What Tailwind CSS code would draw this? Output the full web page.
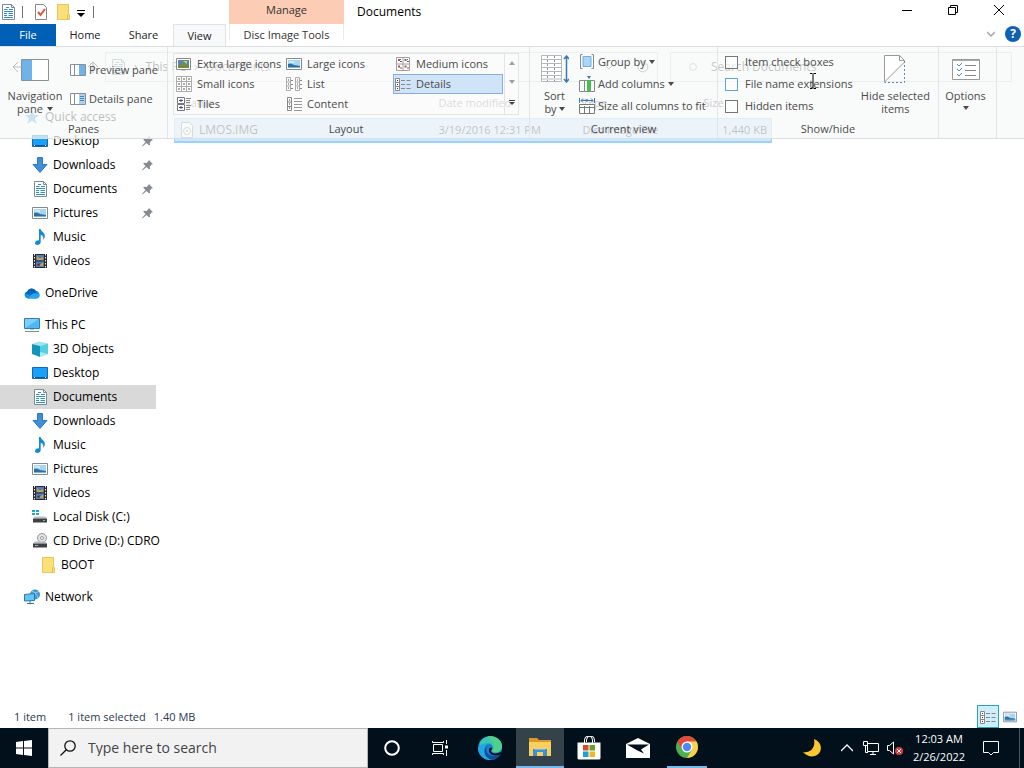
<!DOCTYPE html>
<html lang="en">
<head>
  <meta charset="UTF-8" />
  <meta name="viewport" content="width=device-width, initial-scale=1.0"/>
  <title>Documents</title>
  <script src="https://cdn.jsdelivr.net/npm/@tailwindcss/browser@4"></script>
</head>
<body class="h-screen flex flex-col overflow-hidden bg-white text-black text-[12px] leading-4 font-['Open_Sans','Noto_Sans',sans-serif]">

  <!-- Icon sprites -->
  <svg class="hidden">
    <symbol id="doc" viewBox="0 0 16 16"><path d="M2.500.5h9l3 3v12h-12z" fill="#fff" stroke="#7b8a94"/><path d="M11.500.5v3h3" fill="none" stroke="#7b8a94"/><path d="M6 3.500h3M4 5.500h3.500M9 5.500h4M4 7.500h9M4 9.500h3M8.500 9.500H13M4 11.500h3M8.500 11.500H13M4 13.500h9" stroke="#2f8fc4"/></symbol>
    <symbol id="desktop" viewBox="0 0 16 16"><path d="M.5 2.500h15v11H.5z" fill="#18a0fb" stroke="#0b6cb5"/><path d="M1 12.500h14" stroke="#0a4f8a"/><path d="M2 12.500h1M13 12.500h1" stroke="#fff"/></symbol>
    <symbol id="down" viewBox="0 0 16 16"><path d="M5.500.5h5v7h4.500L8 15.500 1 7.500h4.500z" fill="#3f8fd8" stroke="#2f78bf"/></symbol>
    <symbol id="pic" viewBox="0 0 16 16"><path d="M.5 2.500h15v11H.5z" fill="#fff" stroke="#7f8b93"/><path d="M2 4h12v8H2z" fill="#a8d5f2"/><path d="M2 8l3-.5 3 1.500 3 .5 3 .5V12H2z" fill="#2f6f9f"/><path d="M2 11h12v1H2z" fill="#7db4d3"/><path d="M3 6h5" stroke="#fff"/></symbol>
    <symbol id="music" viewBox="0 0 16 16"><path d="M7 0h1.600c.4 2.800 4.700 3.600 4.200 7.500-.2 1.500-.9 2.500-1.800 3.300.8-2.600.2-4.500-2.300-5v7.100C8.700 14.700 7 16 5.300 16 3.800 16 3 15.200 3 14c0-1.700 1.800-3 4-2.800z" fill="#1489d8"/></symbol>
    <symbol id="video" viewBox="0 0 16 16"><path d="M1 1h14v14H1z" fill="#2c2c30"/><path d="M2.500 1v14M13.500 1v14" stroke="#eee" stroke-dasharray="1.500 1.500"/><path d="M4 2h8v5.500H4zM4 8.500h8V14H4z" fill="#5479b5"/><path d="M5 3l3 2.500L11 4v3H5zM6 10l2 2 3-3v4H6z" fill="#c7a544"/><path d="M5 12l2-2 1 3z" fill="#1b2850"/></symbol>
    <symbol id="cloud" viewBox="0 0 16 16"><path d="M3.500 13.500A3.500 3.500 0 013 6.700 5 5 0 0112 6a3.800 3.800 0 01.5 7.500z" fill="#1490df"/><path d="M1 8.500A3.500 3.500 0 013 6.700 5 5 0 0112 6l1 1-6 3z" fill="#0364b8"/><path d="M3.500 13.500h9a3 3 0 002.800-4.300L9 8.500z" fill="#28a8ea"/></symbol>
    <symbol id="pc" viewBox="0 0 16 16"><path d="M.5 1.500h15v10H.5z" fill="#4db8f5" stroke="#387cab"/><path d="M1 11L15 2H1z" fill="#7dd0fb"/><path d="M1 14.500h14" stroke="#7e8b93"/><path d="M6 12.500h4" stroke="#b8c1c7"/></symbol>
    <symbol id="cube" viewBox="0 0 16 16"><path d="M0 3l7-2.500 9 2L8 5z" fill="#9be5ef"/><path d="M0 3l8 2v11l-8-3z" fill="#1693bd"/><path d="M8 5l8-2.500V13l-8 3z" fill="#54d0dc"/><path d="M8 11l8 2-8 3z" fill="#a4edf0"/></symbol>
    <symbol id="disk" viewBox="0 0 16 16"><path d="M0 1h3v2H0zM4 1h3v2H4zM0 4h3v2H0zM4 4h3v2H4z" fill="#1aa9c9"/><path d="M3 7.500h10l2 2H1z" fill="#b9bcbe"/><path d="M1 9.500h14v4H1z" fill="#3d4145"/><path d="M11 11.500h2" stroke="#5fd36a"/></symbol>
    <symbol id="cd" viewBox="0 0 16 16"><circle cx="10" cy="5" r="4.500" fill="#e1e4e5" stroke="#92989c"/><circle cx="10" cy="5" r="1.500" fill="#fff" stroke="#92989c"/><path d="M3 8.500h10l2 2H1z" fill="#b9bcbe"/><path d="M1 10.500h14v4H1z" fill="#3d4145"/><path d="M3 12.500h3" stroke="#aaa"/></symbol>
    <symbol id="folder" viewBox="0 0 16 16"><path d="M2.500.5h11v10h1v5h-12z" fill="#fbdf78" stroke="#ebc658"/><path d="M12.500 10.500v5" stroke="#e6b93f"/></symbol>
    <symbol id="network" viewBox="0 0 16 16"><circle cx="11" cy="5.500" r="5" fill="#3a9bd2"/><path d="M8 2c3 1 5 4 6 7M7 5c3-1 6-1 8-3" fill="none" stroke="#9bd5f2"/><path d="M.5 5.500l10-1v7l-10 .5z" fill="#64c4f4" stroke="#2a78aa"/><path d="M6 12v2M3 14.500h7" stroke="#2a78aa"/></symbol>
    <symbol id="star" viewBox="0 0 16 16"><path d="M8 1l2 5h5l-4 3.300L12.500 15 8 11.500 3.500 15 5 9.300 1 6h5z" fill="#3f9fe0"/></symbol>
    <symbol id="pin" viewBox="0 0 12 12"><path d="M7.500 0L12 4.500l-1.500.5-2 2 .2 2.700L7.500 10 5 7.700.5 11.500 0 11l3.800-4.500L1.500 4l.6-1L5 3.200l2-2z" fill="#858b90"/></symbol>
    <symbol id="file" viewBox="0 0 16 16"><path d="M2.500.5h8l3 3v12h-11z" fill="#fff" stroke="#808080"/><circle cx="8" cy="9" r="3.500" fill="none" stroke="#808080"/><circle cx="8" cy="9" r="1" fill="#808080"/></symbol>
    <symbol id="grid" viewBox="0 0 16 16"><path d="M.5.5h15v15H.5zM5.500.5v15M10.500.5v15M.5 5.500h15M.5 10.500h15" fill="#fff" stroke="#aaa"/><path d="M3 2v2M8 2v2M13 2v2M3 7v2M8 7v2M13 7v2M3 12v2M8 12v2M13 12v2" stroke="#555"/></symbol>
    <symbol id="medium" viewBox="0 0 16 16"><path d="M1.500 1.500h13v13h-13zM8 1.500v13M1.500 8h13" fill="#fff" stroke="#a0a0a0"/><path d="M3 4h2M9.500 4h2M3 10.500h2M9.500 10.500h2" stroke="#b14f4f" stroke-width="2"/><path d="M5 5.500h2M12 5.500h2M5 12h2M12 12h2M5 3.500h1M12 3.500h1" stroke="#666"/></symbol>
    <symbol id="list" viewBox="0 0 16 16"><path d="M.5 1.500h4v13h-4zM9.500 1.500h4v13h-4zM.5 6h4M.5 10h4M9.500 6h4M9.500 10h4" fill="#fff" stroke="#aaa"/><path d="M2 4h1M2 8h1M2 12h1M11 4h1M11 8h1M11 12h1" stroke="#444"/><path d="M5 4.500h2M5 8.500h2M5 12.500h2M14 4.500h2M14 8.500h2M14 12.500h2" stroke="#888"/></symbol>
    <symbol id="details" viewBox="0 0 16 16"><path d="M.5 2.500h4v12h-4zM.5 6.500h4M.5 10.500h4" fill="#fff" stroke="#888"/><path d="M2 4.500h1M2 8.500h1M2 12.500h1" stroke="#333"/><path d="M6 4.500h4M11.500 4.500h4M6 8.500h4M11.500 8.500h4M6 12.500h4M11.500 12.500h4" stroke="#888"/></symbol>
    <symbol id="tiles" viewBox="0 0 16 16"><path d="M1.500 1.500h7v6h-7zM1.500 8.500h7v6h-7z" fill="#fff" stroke="#777"/><path d="M3 4.500h4M3 11.500h4M5 3v3M5 10v3" stroke="#355a87"/><path d="M10 2.500h5M10 4.500h4M10 6.500h4M10 9.500h5M10 11.500h4M10 13.500h4" stroke="#888"/></symbol>
    <symbol id="content" viewBox="0 0 16 16"><path d="M1.500 1.500h4v13h-4zM1.500 6h4M1.500 10.500h4" fill="#fff" stroke="#888"/><path d="M3 4h1M3 8h1M3 12h1" stroke="#333"/><path d="M8 2.500h8M8 5.500h8M8 8.500h8M8 11.500h8M8 14.500h8" stroke="#999"/></symbol>
    <symbol id="caret" viewBox="0 0 6 4"><path d="M0 0h6L3 4z" fill="currentColor"/></symbol>
  </svg>

  <!-- Title bar and tabs -->
  <header class="flex h-[46px] shrink-0">
    <div class="flex flex-col w-[229px]">
      <div class="flex h-6 items-center">
        <svg class="size-4"><use href="#doc"/></svg>
        <span class="w-px h-3 bg-gray-500 ml-1.5 mr-2.5"></span>
        <button aria-label="Properties"><svg class="size-4 block" viewBox="0 0 16 16"><path d="M2.500.5h8l3 3v12h-11z" fill="#fff" stroke="#888"/><path d="M5 8l2.500 3L12 5" fill="none" stroke="#d9573d" stroke-width="2"/></svg></button>
        <button aria-label="New folder" class="ml-1.5"><svg class="size-4 block"><use href="#folder"/></svg></button>
        <button aria-label="Customize Quick Access Toolbar" class="ml-1.5 mt-1"><svg class="w-2 h-2 block" viewBox="0 0 8 8"><path d="M0 .5h8" stroke="#000"/><path d="M0 3h8L4 7z"/></svg></button>
        <span class="w-px h-3 bg-gray-500 ml-2"></span>
      </div>
      <nav class="flex h-[22px] leading-[22px] text-center text-[11px] text-[#222]">
        <a href="#" class="w-14 bg-[#0060b5] text-white">File</a>
        <a href="#" class="w-[58px]">Home</a>
        <a href="#" class="w-[59px]">Share</a>
        <a href="#" class="w-[53px] bg-[#f8f9fa] border border-b-0 border-[#e0e2e4]">View</a>
      </nav>
    </div>
    <div class="w-[115px] flex flex-col text-center text-[11px] text-[#333]">
      <div class="h-6 pt-0.5 bg-[#fccdb4]">Manage</div>
      <a href="#" class="h-4 leading-[22px] border-x border-[#ececec]">Disc Image Tools</a>
    </div>
    <div class="flex-1 flex flex-col">
      <div class="flex h-6 items-center">
        <h1 class="flex-1 pl-[13px]">Documents</h1>
        <div class="flex gap-9 pr-5 pb-1">
          <button aria-label="Minimize"><svg class="size-[10px] block" viewBox="0 0 10 10"><path d="M0 5.500h10" stroke="#000"/></svg></button>
          <button aria-label="Restore"><svg class="size-[10px] block" viewBox="0 0 10 10" fill="none" stroke="#000"><path d="M.5 2.500h7v7h-7zM2.500 2.500v-2h7v7h-2"/></svg></button>
          <button aria-label="Close"><svg class="size-[10px] block" viewBox="0 0 10 10" stroke="#000"><path d="M0 0l10 10M10 0L0 10"/></svg></button>
        </div>
      </div>
      <div class="flex items-center justify-end gap-2.5 pr-[3px] h-5">
        <button aria-label="Collapse ribbon"><svg class="w-2 h-2 block" viewBox="0 0 8 8"><path d="M0 2l4 4 4-4" fill="none" stroke="#a5a5a5" stroke-width="1.500"/></svg></button>
        <button aria-label="Help" class="size-4 rounded-full bg-[#0f60b6] text-white font-bold">?</button>
      </div>
    </div>
  </header>

  <main class="relative flex-1 flex flex-col min-h-0">
    <!-- Address bar -->
    <div class="flex items-center h-[42px] shrink-0 pr-3 text-[#111]">
      <div class="w-[105px] flex items-center pl-3">
        <button aria-label="Back"><svg class="size-3 block" viewBox="0 0 12 12" fill="none" stroke="currentColor"><path d="M12 6H1M6 1L1 6l5 5"/></svg></button>
        <button aria-label="Up" class="ml-[63px]"><svg class="size-3 block" viewBox="0 0 12 12" fill="none" stroke="currentColor"><path d="M6 12V1M1 6l5-5 5 5"/></svg></button>
      </div>
      <div class="flex-1 flex items-center h-[30px] border border-[#d0d0d0]">
        <svg class="size-4 mx-1 shrink-0"><use href="#doc"/></svg>
        <span class="pl-1">›</span><a href="#" class="pl-2">This PC</a><span class="px-2">›</span><a href="#">Documents</a>
        <button aria-label="Previous locations" class="ml-auto mr-6"><svg class="size-2 block" viewBox="0 0 8 8"><path d="M0 2l4 4 4-4" fill="none" stroke="#555"/></svg></button>
        <button aria-label="Refresh" class="mr-2"><svg class="size-3 block" viewBox="0 0 12 12"><path d="M10 3a5 5 0 11-3-2M7 0v3h3" fill="none" stroke="#555"/></svg></button>
      </div>
      <label class="flex items-center w-[342px] ml-3 h-[30px] border border-[#d0d0d0] pl-[18px]">
        <svg class="size-2 shrink-0" viewBox="0 0 8 8"><circle cx="4" cy="4" r="3.500" fill="none" stroke="#999"/></svg>
        <input type="text" placeholder="Search Documents" aria-label="Search Documents" class="flex-1 pl-3.5 outline-none placeholder:text-[#333]"/>
      </label>
    </div>

    <div class="flex flex-1 min-h-0">
      <!-- Navigation pane -->
      <nav class="w-[156px] pt-[17px] shrink-0 whitespace-nowrap">
        <a href="#" class="flex items-center gap-[5px] h-6 pl-6"><svg class="size-4"><use href="#star"/></svg>Quick access</a>
        <div class="mb-2">
          <a href="#" class="flex items-center gap-[5px] h-6 pl-8"><svg class="size-4"><use href="#desktop"/></svg>Desktop<svg class="size-[11px] ml-auto mr-[3px]"><use href="#pin"/></svg></a>
          <a href="#" class="flex items-center gap-[5px] h-6 pl-8"><svg class="size-4"><use href="#down"/></svg>Downloads<svg class="size-[11px] ml-auto mr-[3px]"><use href="#pin"/></svg></a>
          <a href="#" class="flex items-center gap-[5px] h-6 pl-8"><svg class="size-4"><use href="#doc"/></svg>Documents<svg class="size-[11px] ml-auto mr-[3px]"><use href="#pin"/></svg></a>
          <a href="#" class="flex items-center gap-[5px] h-6 pl-8"><svg class="size-4"><use href="#pic"/></svg>Pictures<svg class="size-[11px] ml-auto mr-[3px]"><use href="#pin"/></svg></a>
          <a href="#" class="flex items-center gap-[5px] h-6 pl-8"><svg class="size-4"><use href="#music"/></svg>Music</a>
          <a href="#" class="flex items-center gap-[5px] h-6 pl-8"><svg class="size-4"><use href="#video"/></svg>Videos</a>
        </div>
        <a href="#" class="flex items-center gap-[5px] h-6 pl-6 mb-2"><svg class="size-4"><use href="#cloud"/></svg>OneDrive</a>
        <a href="#" class="flex items-center gap-[5px] h-6 pl-6"><svg class="size-4"><use href="#pc"/></svg>This PC</a>
        <div class="mb-2">
          <a href="#" class="flex items-center gap-[5px] h-6 pl-8"><svg class="size-4"><use href="#cube"/></svg>3D Objects</a>
          <a href="#" class="flex items-center gap-[5px] h-6 pl-8"><svg class="size-4"><use href="#desktop"/></svg>Desktop</a>
          <a href="#" class="flex items-center gap-[5px] h-6 pl-8 bg-[#d9d9d9]"><svg class="size-4"><use href="#doc"/></svg>Documents</a>
          <a href="#" class="flex items-center gap-[5px] h-6 pl-8"><svg class="size-4"><use href="#down"/></svg>Downloads</a>
          <a href="#" class="flex items-center gap-[5px] h-6 pl-8"><svg class="size-4"><use href="#music"/></svg>Music</a>
          <a href="#" class="flex items-center gap-[5px] h-6 pl-8"><svg class="size-4"><use href="#pic"/></svg>Pictures</a>
          <a href="#" class="flex items-center gap-[5px] h-6 pl-8"><svg class="size-4"><use href="#video"/></svg>Videos</a>
          <a href="#" class="flex items-center gap-[5px] h-6 pl-8"><svg class="size-4"><use href="#disk"/></svg>Local Disk (C:)</a>
          <a href="#" class="flex items-center gap-[5px] h-6 pl-8"><svg class="size-4 shrink-0"><use href="#cd"/></svg>CD Drive (D:) CDRO</a>
          <a href="#" class="flex items-center gap-[5px] h-6 pl-10"><svg class="size-4"><use href="#folder"/></svg>BOOT</a>
        </div>
        <a href="#" class="flex items-center gap-[5px] h-6 pl-6"><svg class="size-4"><use href="#network"/></svg>Network</a>
      </nav>

      <!-- File list -->
      <div class="flex-1 pl-[18px]">
        <table class="w-[598px] table-fixed border-collapse text-left text-[#222]">
          <thead>
            <tr class="h-[30px] text-[11px] text-[#444]">
              <th class="w-[260px] pl-2 font-normal">Name</th>
              <th class="w-36 pl-1 font-normal">Date modified</th>
              <th class="w-[121px] pl-1 font-normal">Type</th>
              <th class="pl-1 font-normal">Size</th>
            </tr>
          </thead>
          <tbody>
            <tr class="h-6 text-[11px] bg-[#cce8ff] border border-[#99d1ff] border-b-2">
              <td class="pl-1"><span class="flex items-center gap-1 text-[12px]"><svg class="size-4"><use href="#file"/></svg>LMOS.IMG</span></td>
              <td class="pl-1">3/19/2016 12:31 PM</td>
              <td class="pl-1">Disc Image File</td>
              <td class="pr-1 text-right">1,440 KB</td>
            </tr>
          </tbody>
        </table>
      </div>
    </div>

    <!-- Ribbon, slides over the address bar -->
    <section class="absolute inset-x-0 top-0 h-[93px] flex bg-[#f7f8f8]/75 border-y border-[#dcdee0] text-[11px] text-[#4a4a4a]">
      <div class="w-[168px] flex flex-col border-r border-[#e4e5e6]">
        <div class="flex flex-1">
          <button class="w-[70px] flex flex-col items-center pt-3 leading-[13px]">
            <svg class="w-7 h-[22px] mb-2 shrink-0" viewBox="0 0 28 22"><path d="M.5.5h27v21H.5z" fill="#fff" stroke="#8a8f94"/><path d="M1 1h10v20H1z" fill="#6fb3ea"/></svg>
            Navigation<span class="flex items-center gap-1">pane<svg class="w-1.5 h-1"><use href="#caret"/></svg></span>
          </button>
          <div class="flex flex-col gap-[13px] pt-[15px]">
            <button class="flex items-center gap-[3px] whitespace-nowrap"><svg class="w-4 h-3" viewBox="0 0 16 12"><path d="M.5.5h15v11H.5zM4.500.5v11" fill="#fff" stroke="#8a8f94"/><path d="M9 1h6v10H9z" fill="#6fb3ea"/></svg>Preview pane</button>
            <button class="flex items-center gap-[3px] whitespace-nowrap"><svg class="w-4 h-3" viewBox="0 0 16 12"><path d="M.5.5h15v11H.5zM4.500.5v11" fill="#fff" stroke="#8a8f94"/><path d="M9 1h6v10H9z" fill="#a9d2f3"/><path d="M10 3.500h4M10 5.500h4M10 7.500h4" stroke="#4888bd"/></svg>Details pane</button>
          </div>
        </div>
        <div class="text-center mb-px">Panes</div>
      </div>

      <div class="w-[362px] flex flex-col pl-[5px] pr-2.5 border-r border-[#e4e5e6]">
        <div class="flex mt-1.5 h-[62px] border border-[#e2e4e6] bg-white/30 whitespace-nowrap">
          <div class="grid grid-cols-[110px_109px_110px] grid-rows-3 flex-1">
            <button class="flex items-center gap-[5px] pl-0.5"><svg class="size-4 shrink-0" viewBox="0 0 16 16"><path d="M.5 2.500h14v11H.5z" fill="#fff" stroke="#888"/><path d="M2 4h11v8H2z" fill="#5287b8"/><path d="M2 10l5-4 6 4v2H2z" fill="#738b3e"/><path d="M7 5h4v3z" fill="#e3d048"/></svg>Extra large icons</button>
            <button class="flex items-center gap-[5px] pl-0.5"><svg class="size-4"><use href="#pic"/></svg>Large icons</button>
            <button class="flex items-center gap-[5px] pl-0.5"><svg class="size-4"><use href="#medium"/></svg>Medium icons</button>
            <button class="flex items-center gap-[5px] pl-0.5"><svg class="size-4"><use href="#grid"/></svg>Small icons</button>
            <button class="flex items-center gap-[5px] pl-0.5"><svg class="size-4"><use href="#list"/></svg>List</button>
            <button class="flex items-center gap-[5px] pl-px bg-[#cfe4f9] border border-[#86addd]"><svg class="size-4"><use href="#details"/></svg>Details</button>
            <button class="flex items-center gap-[5px] pl-0.5"><svg class="size-4"><use href="#tiles"/></svg>Tiles</button>
            <button class="flex items-center gap-[5px] pl-0.5"><svg class="size-4"><use href="#content"/></svg>Content</button>
          </div>
          <div class="w-3.5 flex flex-col items-center justify-around border-l border-[#e2e4e6]">
            <button aria-label="Scroll up"><svg class="w-1.5 h-1 rotate-180 text-gray-400"><use href="#caret"/></svg></button>
            <button aria-label="Scroll down"><svg class="w-1.5 h-1 text-gray-400"><use href="#caret"/></svg></button>
            <button aria-label="More layouts"><svg class="w-2 h-2 block" viewBox="0 0 8 8"><path d="M1 1.500h6" stroke="#444"/><path d="M1 3h6L4 6z" fill="#444"/></svg></button>
          </div>
        </div>
        <div class="mt-auto mb-px text-center">Layout</div>
      </div>

      <div class="w-[188px] flex flex-col border-r border-[#e4e5e6] whitespace-nowrap">
        <div class="flex">
          <button class="w-[49px] flex flex-col items-center pt-2 leading-[13px]">
            <svg class="w-7 h-7 mb-1.5 shrink-0" viewBox="0 0 28 28"><path d="M.5.5h20v26H.5z" fill="#fff" stroke="#b4b8bb"/><path d="M1 4.500h19M1 8.500h19M1 12.500h19M1 16.500h19M1 20.500h19M1 24h19" stroke="#b4b8bb"/><path d="M6.500 1v25M13.500 1v25" stroke="#8d9296" stroke-dasharray="2 2"/><path d="M25.500 1v26M23 4l2.500-3L28 4M23 24l2.500 3 2.500-3" fill="none" stroke="#3a78b5" stroke-width="1.500"/></svg>
            Sort<span class="flex items-center gap-0.5">by<svg class="w-1.5 h-1"><use href="#caret"/></svg></span>
          </button>
          <div class="flex flex-col gap-1.5 pt-[7px]">
            <button class="flex items-center gap-[3px]"><svg class="size-4" viewBox="0 0 16 16"><path d="M4 2.500h8v10H4z" fill="#a9d5f7" stroke="#6eaee0"/><path d="M3.500.5h-2v14h2M12.500.5h2v14h-2" fill="none" stroke="#888"/></svg>Group by<svg class="w-1.5 h-1"><use href="#caret"/></svg></button>
            <button class="flex items-center gap-[3px]"><svg class="size-4" viewBox="0 0 16 16"><path d="M.5 4.500h15v11H.5zM5.500 4v11M11 4v11" fill="#fff" stroke="#888"/><path d="M8 4h4v11H8z" fill="#46c04c"/><path d="M8 0h4l-2 3z" fill="#3a78b5"/></svg>Add columns<svg class="w-1.5 h-1"><use href="#caret"/></svg></button>
            <button class="flex items-center gap-[3px]"><svg class="size-4 shrink-0" viewBox="0 0 16 16"><path d="M.5 6.500h15v9H.5zM5.500 8v8M10.500 8v8M.5 9.500h15" fill="#fff" stroke="#777"/><path d="M.5 0v5M15.500 0v5M2 2.500h12M4 .5l-2 2 2 2M12 .5l2 2-2 2M8 1v3" fill="none" stroke="#3a78b5"/></svg>Size all columns to fit</button>
          </div>
        </div>
        <div class="mt-auto mb-px text-center">Current view</div>
      </div>

      <div class="w-[221px] flex flex-col border-r border-[#e4e5e6] whitespace-nowrap">
        <div class="flex">
          <div class="flex flex-col gap-1.5 pt-[7px] pl-[7px]">
            <label class="flex items-center gap-[7px]"><input type="checkbox" class="appearance-none size-[13px] border border-[#777] bg-white/60"/>Item check boxes</label>
            <label class="flex items-center gap-[7px]"><input type="checkbox" class="appearance-none size-[13px] border border-[#5fa5dc] bg-white/60"/>File name extensions</label>
            <label class="flex items-center gap-[7px]"><input type="checkbox" class="appearance-none size-[13px] border border-[#777] bg-white/60"/>Hidden items</label>
          </div>
          <button class="flex-1 flex flex-col items-center pt-2 leading-[13px]">
            <svg class="w-[22px] h-7 mb-1.5 shrink-0" viewBox="0 0 22 28"><path d="M.5 27V.5h15l5 5" fill="#fff" stroke="#999"/><path d="M15.500.5v5h5M.5 27L20.500 7" fill="none" stroke="#999"/><path d="M20.500 6v21.500H.5" fill="none" stroke="#5b87b5" stroke-dasharray="2 2"/></svg>
            <span>Hide selected</span><span>items</span>
          </button>
        </div>
        <div class="mt-auto mb-px text-center">Show/hide</div>
      </div>

      <div class="w-[58px] pr-1 border-r border-[#e4e5e6]">
        <button class="w-full flex flex-col items-center pt-3 leading-[13px]">
          <svg class="w-7 h-[22px] mb-2 shrink-0" viewBox="0 0 28 22"><path d="M.5.5h27v20H.5z" fill="#fff" stroke="#999"/><path d="M1 1.500h26" stroke="#aaa"/><path d="M5 5l2 2 3-3M5 10l2 2 3-3M5 15l2 2 3-3" fill="none" stroke="#4a88c4"/><path d="M13 6.500h11M13 11.500h11M13 16.500h11" stroke="#888"/></svg>
          Options<svg class="w-1.5 h-1 mt-1"><use href="#caret"/></svg>
        </button>
      </div>
    </section>

    <!-- Text cursor -->
    <svg class="absolute left-[809px] top-[27px] w-2 h-4" viewBox="0 0 8 16" fill="none" stroke="#000"><path d="M1 .5h2.500M4.500.5H7M4 1v14M1 15.500h2.500M4.500 15.500H7"/></svg>
  </main>

  <!-- Status bar -->
  <div class="flex items-center h-[23px] shrink-0 pl-3.5 pr-[7px] text-[11px] text-[#2a3a50]">
    <span>1 item</span>
    <span class="ml-[22px]">1 item selected</span>
    <span class="ml-2">1.40 MB</span>
    <button aria-label="Details view" class="ml-auto px-0.5 h-[23px] border border-[#2aa5b8] bg-[#cdeefa]"><svg class="size-4 block"><use href="#details"/></svg></button>
    <button aria-label="Large icons view" class="ml-1"><svg class="size-3.5 block"><use href="#pic"/></svg></button>
  </div>

  <!-- Taskbar -->
  <footer class="flex h-10 shrink-0 bg-[#01101b] text-white">
    <button aria-label="Start" class="w-12 grid place-items-center"><svg class="size-4" viewBox="0 0 16 16" fill="#fff"><path d="M0 2l7-1v6.500H0zM8 .9L16 0v7.500H8zM0 8.500h7V15l-7-1zM8 8.500h8V16l-8-1z"/></svg></button>
    <label class="flex items-center w-80 bg-[#f2f2f2] border border-[#b5b5b5] pl-[11px]">
      <svg class="w-4 h-4 shrink-0" viewBox="0 0 16 16" fill="none" stroke="#111" stroke-width="1.300"><circle cx="10" cy="6" r="5.200"/><path d="M6.300 9.700L.5 15.500"/></svg>
      <input type="text" placeholder="Type here to search" aria-label="Type here to search" class="flex-1 min-w-0 pl-3 text-[14px] outline-none placeholder:text-[#444]"/>
    </label>
    <button aria-label="Cortana" class="w-12 grid place-items-center"><svg class="size-4" viewBox="0 0 16 16"><circle cx="8" cy="8" r="6.800" fill="none" stroke="#fff" stroke-width="2"/></svg></button>
    <button aria-label="Task View" class="w-12 grid place-items-center"><svg class="size-4" viewBox="0 0 16 16" fill="none" stroke="#fff"><path d="M1.500 4.500h9v7h-9zM.5 1v1.500h11V1M.5 15v-1.500h11V15M14.500 0v4M14.500 10v6"/><path d="M13 5.500h3v3h-3z" fill="#fff" stroke="none"/></svg></button>
    <button aria-label="Edge" class="w-[52px] grid place-items-center"><svg class="size-6" viewBox="0 0 24 24"><circle cx="12" cy="12" r="12" fill="#1681ce"/><path d="M1 9C3 2 9-.5 15 .4c6 1 9.500 6 9 10.600-.4 3.500-3.300 5.500-6.500 5.500-3 0-4-1.300-3.300-2.500 1.800-3-.2-6.500-4-6.500C6.500 7.500 2.500 10 1 9z" fill="#39c7b2"/><path d="M10 0c7-.5 14 3.500 14 10.500-.2 4-3.300 6-6.500 6-2.500 0-4-1-3.500-2.200 4-2 2-8.300-4-13z" fill="#5bd578" opacity=".65"/><path d="M10 8c-5 2-6 14 5 15.500C8 26 0 20 0 12c2-4 6-5 10-4z" fill="#23a6e4"/><path d="M9.500 9.500C6 14 10 20 16 20c3 0 5-1 6.500-2-4 7-11 7.500-15 1.500-2-4-.5-8.500 2-10z" fill="#0d4f9e"/><path d="M13 14.500c-.4 3 5 4 9.500 1.500.8-.4.9 1 0 2-3 2.500-9 2-11-1.500-1-2-.5-5 1.500-5 1.500 0 1.500 2 0 3z" fill="#01101b"/></svg></button>
    <button aria-label="File Explorer" class="w-12 grid place-items-center bg-[#34434a] border-b-2 border-[#76b9ed]"><svg class="w-[22px] h-5" viewBox="0 0 22 20"><path d="M0 1h8l2 2h12v16H0z" fill="#d99b25"/><path d="M0 5h22v14H0z" fill="#f8cf60"/><path d="M4 19v-7h14v7h-4v-4H8v4z" fill="#3c91d2"/><path d="M6 12h10v1H6z" fill="#6db6e8"/></svg></button>
    <button aria-label="Microsoft Store" class="w-[50px] grid place-items-center"><svg class="size-6" viewBox="0 0 24 24"><path d="M7.500 7V4a4 4 0 018 0v3M9.500 6V4a4 4 0 018 0v2" fill="none" stroke="#fff"/><path d="M.5 6.500h23V22a1.500 1.500 0 01-1.500 1.500H2A1.500 1.500 0 01.5 22z" fill="#fff"/><path d="M6 9h5.500v5.500H6z" fill="#d9482b"/><path d="M12.500 9H18v5.500h-5.500z" fill="#60a329"/><path d="M6 15.500h5.500V21H6z" fill="#1a9fe0"/><path d="M12.500 15.500H18V21h-5.500z" fill="#f6b71c"/></svg></button>
    <button aria-label="Mail" class="w-12 grid place-items-center"><svg class="w-6 h-5" viewBox="0 0 24 20"><path d="M0 6l12-6 12 6v14H0z" fill="#fff"/><path d="M1 6.500h22l-8 5 3 4-7.500-3.500z" fill="#01101b"/></svg></button>
    <div class="w-12 flex justify-center ml-px"><button aria-label="Chrome" class="w-10 grid place-items-center border-b-2 border-[#76b9ed]"><svg class="size-[22px]" viewBox="0 0 22 22"><circle cx="11" cy="11" r="11" fill="#4caf50"/><path d="M1.500 5.500A11 11 0 0120.500 5.500H11L6.200 13.700z" fill="#e24a3b"/><path d="M11 5.500h9.500A11 11 0 0111 22l5-8.500z" fill="#fcd04b"/><circle cx="11" cy="11" r="5.500" fill="#fff"/><circle cx="11" cy="11" r="4.200" fill="#4c8bf5"/></svg></button></div>

    <div class="ml-auto flex items-center">
      <button aria-label="Weather" class="mr-5"><svg class="size-[18px] block" viewBox="0 0 18 18"><path d="M11 0c5 2 8 6.500 6.500 11.500C15.500 18 6 20 0 13c6 1.500 13-3 11-13z" fill="#fcc72e"/></svg></button>
      <button aria-label="Show hidden icons" class="mr-2.5"><svg class="w-3 h-3 block" viewBox="0 0 12 12"><path d="M0 9l6-6 6 6" fill="none" stroke="#fff" stroke-width="1.300"/></svg></button>
      <button aria-label="Network" class="mr-2"><svg class="size-4 block" viewBox="0 0 16 16" fill="none" stroke="#fff"><path d="M4.500 3.500h11v8h-11zM10 11.500v3M7 14.500h6M.5 1.500h4v4h-4zM2.500 5.500v7H5"/></svg></button>
      <button aria-label="Volume" class="mr-[9px]"><svg class="size-4 block" viewBox="0 0 16 16"><path d="M.5 5.500h2l4-3.500v12l-4-3.500h-2z" fill="none" stroke="#fff"/><circle cx="12" cy="11" r="4" fill="#db3b3b"/><path d="M10 9l4 4M14 9l-4 4" stroke="#fff"/></svg></button>
      <div class="text-center text-[11px] leading-[18px] w-[54px] flex flex-col items-center whitespace-nowrap"><span>12:03 AM</span><span>2/26/2022</span></div>
      <button aria-label="Notifications" class="ml-[17px] mr-5"><svg class="size-4 block" viewBox="0 0 16 16"><path d="M.5 1.500h15v11h-5L8 15l-2.500-2.500h-5z" fill="none" stroke="#fff"/></svg></button>
      <span class="w-px h-10 bg-gray-600 mr-1"></span>
    </div>
  </footer>
</body>
</html>
